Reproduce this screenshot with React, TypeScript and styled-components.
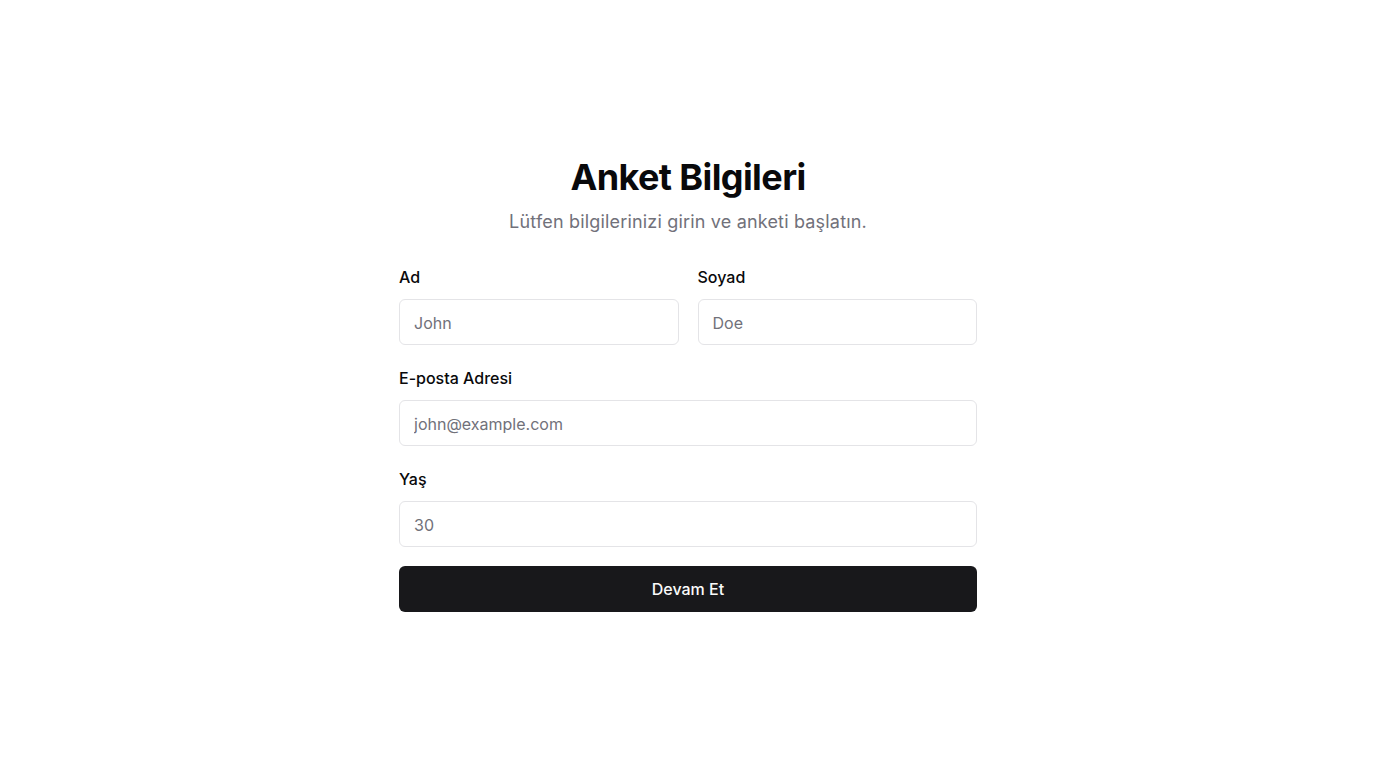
import React from "react";
import styled, { createGlobalStyle } from "styled-components";

const Global = createGlobalStyle`
  html, body { margin: 0; padding: 0; background: #ffffff; }
  body { font-family: Inter, "Noto Sans", "Liberation Sans", sans-serif; color: #09090b; }
  * { box-sizing: border-box; }
`;

const Page = styled.main`
  min-height: 100vh;
  display: flex;
  align-items: center;
  justify-content: center;
`;

const Card = styled.div`
  width: 578px;
  display: flex;
  flex-direction: column;
`;

const Header = styled.header`
  display: flex;
  flex-direction: column;
  align-items: center;
  gap: 11px;
  margin-bottom: 29px;
`;

const Title = styled.h1`
  margin: 0;
  font-size: 36px;
  line-height: 40px;
  font-weight: 700;
  color: #09090b;
  letter-spacing: -0.6px;
`;

const Subtitle = styled.p`
  margin: 0;
  font-size: 18px;
  line-height: 28px;
  color: #71717a;
  letter-spacing: 0.18px;
`;

const Form = styled.form`
  display: flex;
  flex-direction: column;
  gap: 21px;
`;

const Row = styled.div`
  display: grid;
  grid-template-columns: 1fr 1fr;
  gap: 19px;
`;

const Field = styled.div`
  display: flex;
  flex-direction: column;
  gap: 10px;
`;

const Label = styled.label`
  font-size: 16px;
  line-height: 24px;
  font-weight: 500;
  color: #09090b;
`;

const Input = styled.input`
  height: 46px;
  width: 100%;
  padding: 2px 14px 0;
  border: 1px solid #e4e4e7;
  border-radius: 6px;
  background: #ffffff;
  font-family: inherit;
  font-size: 16px;
  color: #09090b;
  outline: none;
  &::placeholder { color: #71717a; }
`;

const Button = styled.button`
  margin-top: -2px;
  height: 46px;
  width: 100%;
  border: none;
  border-radius: 6px;
  background: #18181b;
  color: #fafafa;
  font-family: inherit;
  font-size: 16px;
  font-weight: 500;
  cursor: pointer;
`;

export default function App() {
  return (
    <>
      <Global />
      <Page>
        <Card>
          <Header>
            <Title>Anket Bilgileri</Title>
            <Subtitle>Lütfen bilgilerinizi girin ve anketi başlatın.</Subtitle>
          </Header>
          <Form onSubmit={(e) => e.preventDefault()}>
            <Row>
              <Field>
                <Label htmlFor="ad">Ad</Label>
                <Input id="ad" placeholder="John" />
              </Field>
              <Field>
                <Label htmlFor="soyad">Soyad</Label>
                <Input id="soyad" placeholder="Doe" />
              </Field>
            </Row>
            <Field>
              <Label htmlFor="email">E-posta Adresi</Label>
              <Input id="email" type="email" placeholder="john@example.com" />
            </Field>
            <Field>
              <Label htmlFor="yas">Yaş</Label>
              <Input id="yas" type="number" placeholder="30" />
            </Field>
            <Button type="submit">Devam Et</Button>
          </Form>
        </Card>
      </Page>
    </>
  );
}
